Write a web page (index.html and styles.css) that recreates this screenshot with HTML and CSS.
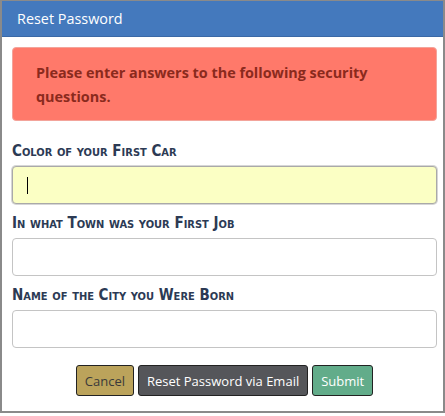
FILE: index.html
```html
<!DOCTYPE html>
<html>
<head>
<meta charset="utf-8">
<link rel="stylesheet" href="styles.css">
</head>
<body>
<div class="dialog">
  <div class="header">Reset Password</div>
  <div class="content">
    <div class="alert">Please enter answers to the following security questions.</div>
    <div class="field first">
      <label class="label">Color of your First Car</label>
      <div class="input focused"><span class="caret"></span></div>
    </div>
    <div class="field">
      <label class="label">In what Town was your First Job</label>
      <div class="input"></div>
    </div>
    <div class="field">
      <label class="label">Name of the City you Were Born</label>
      <div class="input"></div>
    </div>
    <div class="actions">
      <button class="btn btn-cancel">Cancel</button>
      <button class="btn btn-reset">Reset Password via Email</button>
      <button class="btn btn-submit">Submit</button>
    </div>
  </div>
</div>
</body>
</html>
```
FILE: styles.css
```css
html, body {
  margin: 0;
  padding: 0;
  background: #fff;
}
.dialog {
  width: 445px;
  height: 413px;
  box-sizing: border-box;
  border-style: solid;
  border-color: #8a8a8a;
  border-width: 1px 2px 2px 2px;
  font-family: "Open Sans", "Noto Sans", sans-serif;
}
.header {
  height: 35px;
  line-height: 35px;
  background: #4479bd;
  border-bottom: 1px solid #3b69a6;
  color: #fff;
  font-size: 14.4px;
  padding-left: 15px;
}
.content {
  padding: 10px 6px 0 10px;
}
.alert {
  background: #ff796a;
  border: 1px solid #f3a49b;
  border-radius: 4px;
  color: #8a2a1d;
  font-weight: 700;
  font-size: 14.4px;
  line-height: 24px;
  padding: 13px 40px 11px 23px;
}
.field {
  margin-top: 10px;
}
.field.first {
  margin-top: 21px;
}
.label {
  display: block;
  font-family: "DejaVu Sans Condensed", "DejaVu Sans", sans-serif;
  font-weight: 700;
  font-variant: small-caps;
  font-size: 15px;
  line-height: 18px;
  color: #2c3a54;
  margin-bottom: 6px;
}
.input {
  height: 36px;
  border: 1px solid #c4c4c4;
  border-radius: 4px;
  background: #fff;
  position: relative;
}
.input.focused {
  background: #fbffc4;
  border-color: #a9a9a9;
  box-shadow: 0 0 0 1px #d6d6d6;
}
.caret {
  position: absolute;
  left: 14px;
  top: 10px;
  width: 1px;
  height: 17px;
  background: #000;
}
.actions {
  display: flex;
  justify-content: center;
  gap: 4px;
  margin-top: 17px;
}
.btn {
  height: 31px;
  border: 1px solid #222;
  border-radius: 3px;
  font-family: "Open Sans", "Noto Sans", sans-serif;
  font-size: 13px;
  padding: 0 8px;
  color: #fff;
}
.btn-cancel {
  background: #bba35b;
  color: #3a3a3a;
}
.btn-reset {
  background: #55565a;
}
.btn-submit {
  background: #62ac8a;
}
```
